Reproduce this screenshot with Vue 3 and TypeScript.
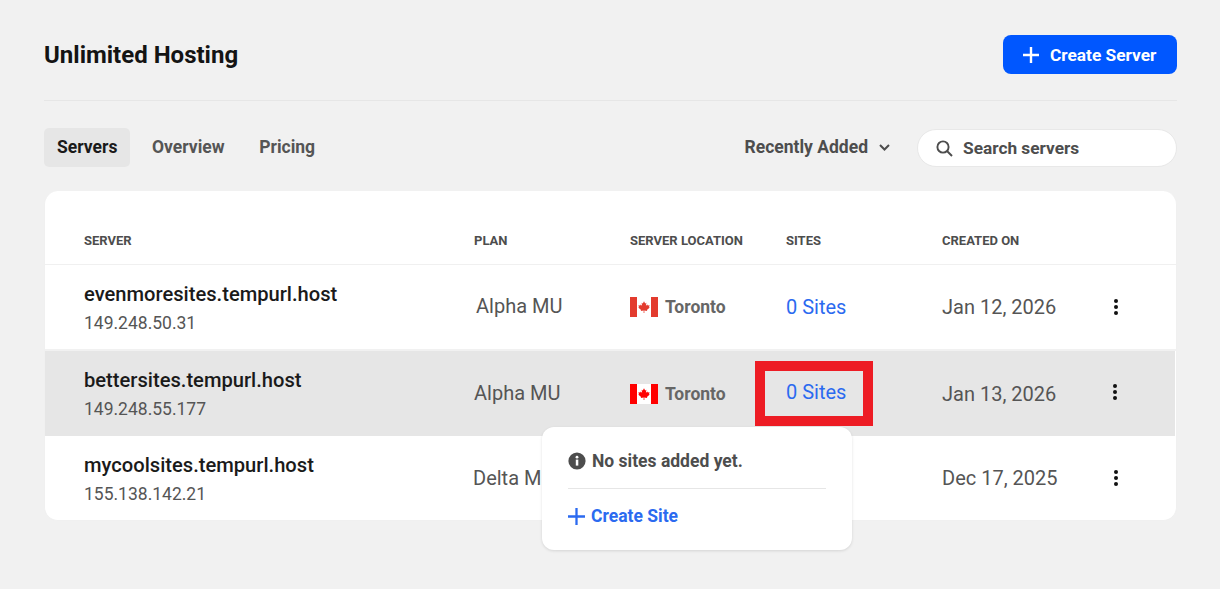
<script setup lang="ts">
interface ServerRow {
    id: string
    host: string
    ip: string
    plan: string
    sites: string
    created: string
    rowClass: string
}

const tabs = ['Servers', 'Overview', 'Pricing']

const servers: ServerRow[] = [
    {
        id: 'a',
        host: 'evenmoresites.tempurl.host',
        ip: '149.248.50.31',
        plan: 'Alpha MU',
        sites: '0 Sites',
        created: 'Jan 12, 2026',
        rowClass: 'first',
    },
    {
        id: 'b',
        host: 'bettersites.tempurl.host',
        ip: '149.248.55.177',
        plan: 'Alpha MU',
        sites: '0 Sites',
        created: 'Jan 13, 2026',
        rowClass: 'hovered',
    },
    {
        id: 'c',
        host: 'mycoolsites.tempurl.host',
        ip: '155.138.142.21',
        plan: 'Delta MU',
        sites: '',
        created: 'Dec 17, 2025',
        rowClass: 'last',
    },
]
</script>

<template>
    <div class="page">
        <header class="top">
            <h1>Unlimited Hosting</h1>
            <button class="create-btn">
                <svg width="16" height="16" viewBox="0 0 16 16">
                    <path d="M8 0v16M0 8h16" stroke="#fff" stroke-width="2.4" fill="none" />
                </svg>
                Create Server
            </button>
        </header>

        <div class="toolbar">
            <nav class="tabs">
                <a v-for="(tab, i) in tabs" :key="tab" class="tab" :class="{ active: i === 0 }">{{ tab }}</a>
            </nav>
            <div class="tools">
                <div class="sort">
                    Recently Added
                    <svg width="11" height="7" viewBox="0 0 11 7">
                        <path d="M1 1l4.500 4.500L10 1" stroke="#4d4d4d" stroke-width="2" fill="none" />
                    </svg>
                </div>
                <div class="search">
                    <svg width="17" height="17" viewBox="0 0 17 17">
                        <circle cx="7" cy="7" r="5.600" stroke="#4d4d4d" stroke-width="1.900" fill="none" />
                        <path d="M11 11l5 5" stroke="#4d4d4d" stroke-width="2" fill="none" />
                    </svg>
                    <span>Search servers</span>
                </div>
            </div>
        </div>

        <section class="card">
            <div class="row head">
                <div>SERVER</div>
                <div>PLAN</div>
                <div>SERVER LOCATION</div>
                <div>SITES</div>
                <div>CREATED ON</div>
            </div>
            <div v-for="s in servers" :key="s.id" class="row body" :class="s.rowClass">
                <div class="server">
                    <div class="host">{{ s.host }}</div>
                    <div class="ip">{{ s.ip }}</div>
                </div>
                <div class="plan">{{ s.plan }}</div>
                <!-- the third row's location and sites sit behind the popover -->
                <div class="location">
                    <template v-if="s.sites">
                        <svg class="flag" width="28" height="20" viewBox="0 0 28 20">
                            <rect width="28" height="20" fill="#fff" />
                            <rect width="7" height="20" class="flag-red" />
                            <rect x="21" width="7" height="20" class="flag-red" />
                            <path
                                class="flag-red"
                                d="M14 4.200l1.200 2.200 1.200-.6-.5 3 1.500-1.300.4 1.100 1.800-.3-.6 1.900.8.4-2.900 2.300.3 1-2.900-.4.100 2.600h-.8l.1-2.600-2.900.4.3-1-2.900-2.300.8-.4-.6-1.900 1.800.3.4-1.100 1.500 1.300-.5-3 1.200.6z"
                            />
                        </svg>
                        <span>Toronto</span>
                    </template>
                </div>
                <div class="sites">
                    <a>{{ s.sites }}</a>
                    <template v-if="s.rowClass === 'hovered'">
                        <div class="highlight"></div>
                        <div class="popover">
                            <div class="pop-msg">
                                <svg width="18" height="18" viewBox="0 0 18 18">
                                    <circle cx="9" cy="9" r="8.600" fill="#4d4d4d" />
                                    <rect x="7.800" y="7.600" width="2.500" height="6" fill="#fff" />
                                    <circle cx="9" cy="5.200" r="1.400" fill="#fff" />
                                </svg>
                                No sites added yet.
                            </div>
                            <a class="pop-link">
                                <svg width="17" height="17" viewBox="0 0 17 17">
                                    <path d="M8.500 0v17M0 8.500h17" stroke="#2b6af0" stroke-width="2.300" fill="none" />
                                </svg>
                                Create Site
                            </a>
                        </div>
                    </template>
                </div>
                <div class="created">{{ s.created }}</div>
                <div class="more">
                    <svg width="6" height="16" viewBox="0 0 6 16">
                        <circle cx="3" cy="2" r="2" fill="#111" />
                        <circle cx="3" cy="8" r="2" fill="#111" />
                        <circle cx="3" cy="14" r="2" fill="#111" />
                    </svg>
                </div>
            </div>
        </section>
    </div>
</template>

<style>
html,
body {
    margin: 0;
    background: #f1f1f1;
}
</style>

<style scoped>
.page {
    box-sizing: border-box;
    width: 1220px;
    height: 589px;
    padding: 35px 43px 0 44px;
    background: #f1f1f1;
    font-family: Roboto, 'Liberation Sans', sans-serif;
    color: #4d4d4d;
    overflow: hidden;
}
.top {
    display: flex;
    align-items: center;
    justify-content: space-between;
    height: 39px;
    padding-bottom: 26px;
    border-bottom: 1px solid #e6e6e6;
}
h1 {
    margin: 0;
    font-size: 24px;
    line-height: 40px;
    font-weight: 700;
    color: #141414;
}
.create-btn {
    display: flex;
    align-items: center;
    gap: 11px;
    height: 39px;
    width: 174px;
    padding: 1px 0 0 20px;
    border: 0;
    border-radius: 8px;
    background: #0057ff;
    color: #fff;
    font: 700 17.300px Roboto, sans-serif;
}
.toolbar {
    display: flex;
    align-items: center;
    justify-content: space-between;
    margin-top: 27px;
    height: 39px;
}
.tabs {
    display: flex;
    gap: 8.600px;
}
.tab {
    display: block;
    padding: 0 13px;
    line-height: 39px;
    border-radius: 5px;
    font-size: 17.500px;
    font-weight: 700;
    color: #555;
}
.tab.active {
    background: #e6e6e6;
    color: #1a1a1a;
}
.tools {
    display: flex;
    align-items: center;
    gap: 27px;
}
.sort {
    display: flex;
    align-items: center;
    gap: 11px;
    margin-bottom: 1px;
    font-size: 17.500px;
    font-weight: 700;
    color: #4d4d4d;
}
.search {
    box-sizing: border-box;
    display: flex;
    align-items: center;
    gap: 10px;
    width: 260px;
    height: 38px;
    margin-top: 1px;
    padding-left: 18px;
    background: #fff;
    border: 1px solid #e8e8e8;
    border-radius: 20px;
    font-size: 17.300px;
    font-weight: 700;
    color: #4d4d4d;
}
.card {
    margin-top: 24px;
    height: 330px;
    background: #fff;
    border: 1px solid #f0f0f0;
    border-top: 0;
    box-sizing: border-box;
    border-radius: 14px;
}
.row {
    display: grid;
    grid-template-columns: 390px 156px 156px 156px 156px 1fr;
    align-items: center;
    padding-left: 39px;
}
.head {
    height: 74px;
    padding-top: 26px;
    box-sizing: border-box;
    border-bottom: 1px solid #f0f0f0;
    font-size: 13px;
    font-weight: 700;
    color: #4d4d4d;
}
.body {
    height: 85px;
    box-sizing: border-box;
    font-size: 20px;
    color: #555;
}
.body.first {
    padding-bottom: 1px;
    height: 86px;
    border-bottom: 2px solid #f1f1f1;
}
.body.hovered {
    margin-right: 1px;
    background: #e6e6e6;
}
.body.last {
    margin-top: 1px;
    height: 84px;
    padding-bottom: 2px;
}
.server {
    margin-top: 2px;
}
.hovered .server,
.last .server {
    margin-top: 0;
}
.host {
    font-size: 20.150px;
    line-height: 24px;
    font-weight: 500;
    color: #1a1a1a;
}
.ip {
    margin-top: 7px;
    font-size: 17.500px;
    line-height: 20px;
    color: #555;
}
.first .plan {
    margin-left: 2px;
    margin-bottom: 2px;
}
.hovered .plan {
    margin-bottom: 2px;
}
.last .plan {
    margin-left: -1px;
}
.location {
    display: flex;
    align-items: center;
    gap: 7px;
    font-size: 17.500px;
    font-weight: 700;
    color: #666;
}
.flag-red {
    fill: #e33b2e;
}
.hovered .flag-red {
    fill: #f00;
}
.sites {
    position: relative;
    color: #2b6af0;
}
.hovered .sites {
    margin-bottom: 4px;
}
.highlight {
    position: absolute;
    left: -31px;
    top: -19px;
    width: 118px;
    height: 65px;
    box-sizing: border-box;
    border: 10px solid #ed1c24;
}
.popover {
    position: absolute;
    left: -244px;
    top: 47px;
    z-index: 2;
    box-sizing: border-box;
    width: 310px;
    height: 123px;
    padding: 0 26px;
    background: #fff;
    border-radius: 12px;
    box-shadow: 0 1px 3px rgba(0, 0, 0, 0.12);
    font-size: 17.500px;
}
.pop-msg {
    display: flex;
    align-items: center;
    gap: 6px;
    height: 62px;
    padding-top: 7px;
    box-sizing: border-box;
    border-bottom: 1px solid #e6e6e6;
    font-weight: 700;
    color: #4d4d4d;
}
.pop-link {
    display: flex;
    align-items: center;
    gap: 6px;
    height: 55px;
    font-weight: 700;
    color: #2b6af0;
}
.created {
    color: #555;
}
.more {
    display: flex;
    padding-left: 15px;
}
.hovered .more {
    padding-left: 14px;
    margin-bottom: 4px;
}
</style>
